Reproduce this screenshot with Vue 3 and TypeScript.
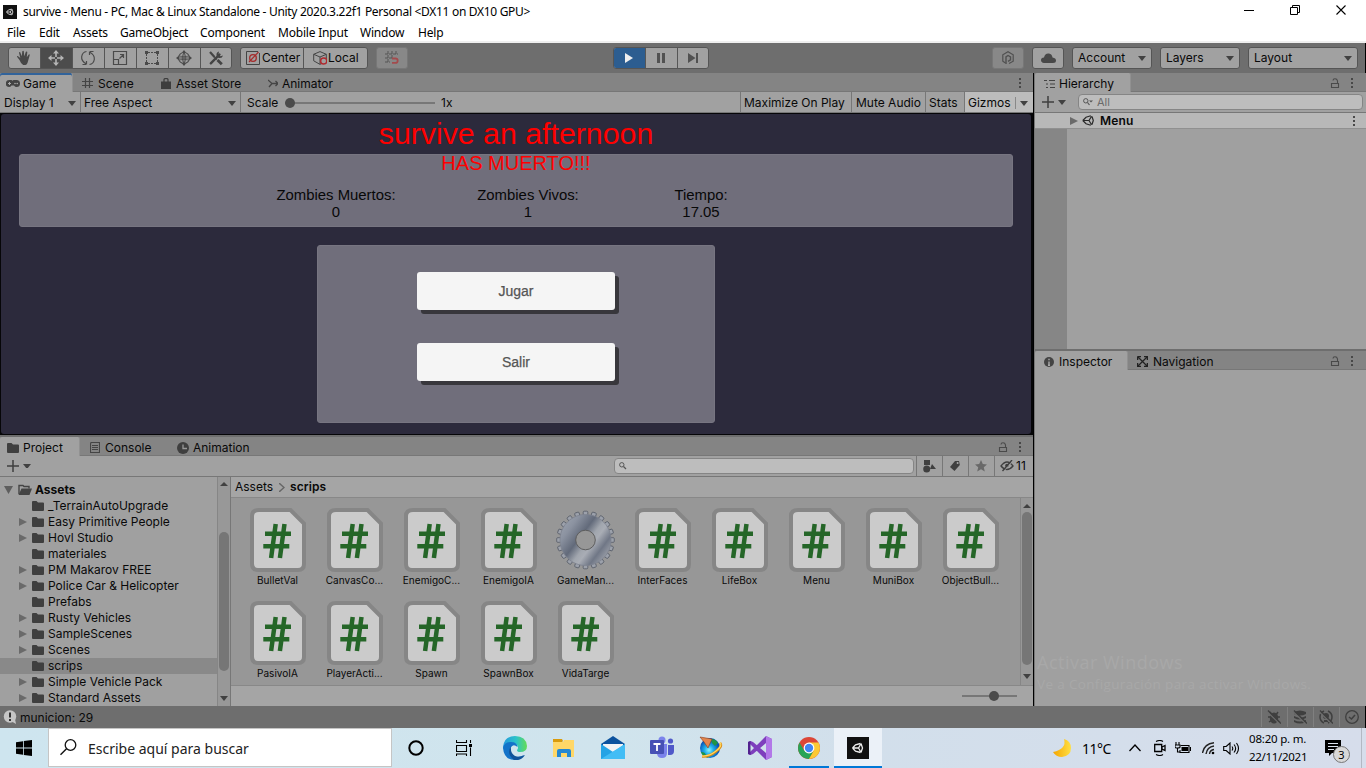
<script setup lang="ts">
import { h } from 'vue'

interface IconProps { name: string; w: number; h: number }
interface Tab { label: string; icon: string; iw: number; ih: number; width: number; pad: number; gap: number; active?: boolean }
interface TreeRow { label: string; arrow: boolean }
interface Asset { label: string; gear?: boolean }

const gearTeeth = Array.from({ length: 20 }, (_, i) =>
  `<rect x="27.2" y="3.2" width="4.600" height="8" rx="1" transform="rotate(${i * 18} 29.5 32)"/>`).join('')

const icons: Record<string, string> = {
  unity: `<rect width="22" height="22" fill="#111"/><path d="M5.500 11l3-3.200 5-1.300M5.500 11l3 3.200 5 1.300M14 6.500l1.500 4.500-1.500 4.500M6 11h5.500l2.300-4M11.500 11l2.300 4" fill="none" stroke="#eee" stroke-width="1.300"/>`,
  min: '<path d="M0 5.500h10" stroke="#000"/>',
  restore: '<path d="M.5 2.500h7v7h-7zM2.500 2.500v-2h7v7h-2" fill="none" stroke="#000"/>',
  close: '<path d="M.5.5l9 9M9.500.5l-9 9" stroke="#000" stroke-width="1.100"/>',
  hand: '<path d="M3.500 10L1 6.800Q.8 5.800 1.800 5.900L4.300 8 3 2.800Q3.300 1.600 4.200 2.300l1.600 4L6.300 1.300q.8-.9 1.500 0l.4 5L9.900 1.800q1-.7 1.400.3L10.800 7.300 12.700 4.400q1.200-.3 1 .8L12.200 10.500q-1 4.500-3 4.500H7.200Q5 14 3.500 10z" fill="#474747"/>',
  move: '<path d="M8 0l3 3.500H5zM8 16l-3-3.500h6zM0 8l3.500-3v6zM16 8l-3.500 3V5z" fill="#b5b5b5"/><path d="M8 3v4M8 9v4M3 8h4M9 8h4" stroke="#b5b5b5" stroke-width="1.600"/>',
  rotate: '<path d="M6.500 14Q1 11 1.700 6.500 2.500 2 6.500 1.500M9.500 2q5.500 3 4.800 7.500-.8 4.500-4.800 5M6 14.500H2.500M6.500 14.500V11M10 1.500h3.500M9.500 1.500V5" fill="none" stroke="#4a4a4a" stroke-width="1.200"/>',
  scale: '<path d="M1.500 1.500h13v13h-13zM1.500 9.500h5v5M7.500 8.500l4-4M8 4.500h3.500V8" fill="none" stroke="#4a4a4a" stroke-width="1.200"/>',
  rect: '<path d="M4 2.500h8M4 13.500h8M2.500 4v8M13.500 4v8" stroke="#4a4a4a" stroke-width="1" stroke-dasharray="2 1"/><path d="M1 1h3v3H1zM12 1h3v3h-3zM1 12h3v3H1zM12 12h3v3h-3z" fill="#4a4a4a"/>',
  transform: '<g fill="none" stroke="#4a4a4a"><circle cx="8" cy="8" r="5.500" stroke-width="1.100"/><path d="M8 2v12M2 8h12M8 2.500Q4.500 8 8 13.500M8 2.500q3.500 5.500 0 11M3 6q5 1.500 10 0M3 10q5-1.500 10 0" stroke-width=".8"/></g><path d="M8 0l2.200 2.800H5.800zM8 16l-2.200-2.800h4.400zM0 8l2.800-2.200v4.400zM16 8l-2.800 2.200V5.800z" fill="#4a4a4a"/>',
  tools: '<path d="M2.800 13.300L11.500 4.500" stroke="#444" stroke-width="2.400" stroke-linecap="round"/><path d="M11 1.500a3.300 3.300 0 1 0 4 4l-2.500.8-2-2z" fill="#444"/><path d="M2 2l4.500 5" stroke="#444" stroke-width="2.200"/><path d="M6 6.500l3 3" stroke="#444" stroke-width="1.200"/><path d="M9.500 10l4.300 4.300" stroke="#444" stroke-width="2.800"/>',
  pivot: '<path d="M12 .5H.5v13h13V2" fill="none" stroke="#444"/><circle cx="7" cy="7" r="3.300" fill="none" stroke="#a52a2a" stroke-width="1.300"/><path d="M3 11L12.500 1" stroke="#a52a2a" stroke-width="1.100"/>',
  local: '<path d="M.7 3.300L7 .6l6.300 2.700v6.500L7 13.400.7 9.800zM.7 3.300L7 6l6.300-2.700M7 6v7" fill="none" stroke="#444"/><circle cx="10.700" cy="10" r="3.100" fill="#a0a0a0" stroke="#b02a2f" stroke-width="1.500"/>',
  snap: '<path d="M3 0v12M7 0v7M11 0v4M0 3h13M0 7h7M0 11h5" stroke="#555" stroke-width="1" stroke-dasharray="3 1"/><path d="M7 7.500h3.500a2.200 2.200 0 0 1 0 4.400H7" fill="none" stroke="#a34b4d" stroke-width="1.800"/>',
  play: '<path d="M1 0l8 5-8 5z" fill="#eee"/>',
  pause: '<path d="M1 0h3v10H1zM6 0h3v10H6z" fill="#515151"/>',
  step: '<path d="M0 0l7.500 5L0 10zM8 0h2v10H8z" fill="#515151"/>',
  package: '<path d="M3.500 12L.8 10.200V3.800L6 .8l5.200 3v6.400L7 12.500" fill="none" stroke="#505050" stroke-width="1.200"/><path d="M4 13V5.800L6 4.500l2.500 1.300v3.100L6 10.300" fill="none" stroke="#505050" stroke-width="1.400"/>',
  cloud: '<path d="M3 10Q0 9.500 0 7t3-2.500Q4 0 8 .5q3 .5 3.500 4Q15 5 15 7.500T12 10z" fill="#484848"/>',
  down: '<path d="M0 0h8L4 5z" fill="#414141"/>',
  up: '<path d="M0 4h8L4 0z" fill="#414141"/>',
  right: '<path d="M0 0v8l8-4z" fill="#6a6a6a"/>',
  open: '<path d="M0 0h9L4.500 8z" fill="#5e5e5e"/>',
  game: '<path d="M3.500 1h2l1 .8 1-.8h3a3.500 3.500 0 0 1 0 7q-1.500 0-2.500-1.500H5.500Q4.500 8 3 8a3.400 3.400 0 0 1 .5-7z" fill="#444"/><path d="M2 4.500h3M3.500 3v3" stroke="#aaa"/><circle cx="9" cy="4.500" r=".8" fill="#aaa"/><circle cx="11.200" cy="4.500" r=".8" fill="#aaa"/>',
  scene: '<path d="M3.500 0v10M7.500 0v10M0 3.500h11M0 7.500h11" stroke="#444" stroke-width="1.200"/>',
  bag: '<path d="M0 3.500h10V11H0z" fill="#3d3d3d"/><path d="M3 4V1.500q0-1 2-1t2 1V4" fill="none" stroke="#3d3d3d" stroke-width="1.200"/>',
  animator: '<path d="M0 1l4 3.500L1 8M4 4.500h5.500M7.500 2L10 4.500 7.500 7" fill="none" stroke="#444" stroke-width="1.300"/>',
  folder: '<path d="M0 2Q0 1 1 1h3.500L6 2.500h5q1 0 1 1V10q0 1-1 1H1q-1 0-1-1z" fill="#3f3f3f"/>',
  folderOpen: '<path d="M1 10V1.500h4l1 1h5v2" fill="none" stroke="#444" stroke-width="1.400"/><path d="M3.500 4.500H14L11.500 11H.5z" fill="#444"/>',
  console: '<path d="M1 .5h8.500v10H.5V2z" fill="none" stroke="#444" stroke-width="1.100"/><path d="M2 3.500h6M2 5.500h6M2 7.500h6" stroke="#444"/>',
  clock: '<circle cx="6" cy="6" r="6" fill="#3f3f3f"/><path d="M6 2.500V6.500h4" fill="none" stroke="#999" stroke-width="1.300"/>',
  list: '<path d="M0 1.500h3M5 1.500h6M2 5h2M6 5h5M2 8.500h2M6 8.500h5" stroke="#444" stroke-width="1.200"/>',
  info: '<circle cx="5" cy="5" r="5" fill="#444"/><path d="M5 1.800v1.500M5 4.500v4M4 8.200h2" stroke="#aaa" stroke-width="1.400"/>',
  nav: '<path d="M1 1l9 9M10 1l-9 9" stroke="#222" stroke-width="1.300"/><path d="M.5.5H4M.5.5V4M7 .5h3.500V4M.5 7v3.500H4M10.500 7v3.500H7" fill="none" stroke="#222" stroke-width="1.600"/>',
  lock: '<path d="M3 2.500Q3 .8 5 .8t2.500 2V5M1.500 5.500h7v4h-7z" fill="none" stroke="#4a4a4a" stroke-width="1.100"/>',
  dots: '<path d="M0 0h2v2H0zM0 4h2v2H0zM0 8h2v2H0z" fill="#484848"/>',
  plus: '<path d="M6 0v12M0 6h12" stroke="#3f3f3f" stroke-width="1.500"/>',
  search: '<circle cx="2.800" cy="2.800" r="2.200" fill="none" stroke="#555" stroke-width="1"/><path d="M4.500 4.500L7 7" stroke="#555" stroke-width="1.200"/>',
  searchMenu: '<circle cx="2.800" cy="2.800" r="2.200" fill="none" stroke="#555" stroke-width="1"/><path d="M4.500 4.500L6.500 7" stroke="#555" stroke-width="1.200"/><path d="M6 2.500h4L8 4.500z" fill="#555"/>',
  unityOutline: '<path d="M.8 5.500L4 2.300 8.800.8M.8 5.500L4 8.700l4.800 1.500M10 1.500l1.300 4-1.300 4M1 5.500h6l2.600-4.300M7 5.500l2.600 4.300" fill="none" stroke="#2a2a2a" stroke-width="1.200"/>',
  crumb: '<path d="M0 0l5 4.500L0 9" fill="none" stroke="#666" stroke-width="1.400"/>',
  types: '<path d="M1 0h6v5H1zM9 4l4 5H7z" fill="#3f3f3f"/><circle cx="3.700" cy="9" r="3.500" fill="#3f3f3f"/>',
  tag: '<path d="M6 1l4 0 .8 4-5.300 6L1 7z" fill="#3f3f3f"/><circle cx="8.600" cy="3" r="1" fill="#aaa"/>',
  star: '<path d="M6 0l1.800 4 4.200.4-3.200 2.800 1 4.300L6 9.200l-3.800 2.300 1-4.300L0 4.400 4.200 4z" fill="#696969"/>',
  eye: '<path d="M1 6q6-8 12 0-6 7-12 0z" fill="none" stroke="#3f3f3f" stroke-width="1.300"/><circle cx="7" cy="5.500" r="1.800" fill="#3f3f3f"/><path d="M3.300 11.500L13 1" stroke="#a1a1a1" stroke-width="1"/><path d="M2.500 11L12 0" stroke="#3f3f3f" stroke-width="1.300"/>',
  script: '<path d="M9 2h31.500L54 15.500V56q0 6-6 6H8q-6 0-6-6V8q0-6 7-6z" fill="#cbcbcb" stroke="#868686" stroke-width="4"/><path d="M25.700 16l-4.600 34M34.500 16l-4.600 34M15 25.800H41M13.300 38.200H39.300" stroke="#256628" stroke-width="4.500" fill="none"/>',
  gear: `<defs><linearGradient id="metal" x1=".1" y1=".2" x2=".9" y2=".8"><stop offset="0" stop-color="#949ba8"/><stop offset=".12" stop-color="#8b92a0"/><stop offset=".38" stop-color="#626a7a"/><stop offset=".56" stop-color="#a1a6ae"/><stop offset=".66" stop-color="#a9adb5"/><stop offset=".85" stop-color="#707786"/><stop offset="1" stop-color="#9398a2"/></linearGradient></defs><g fill="#9ca1ab" stroke="#555b66" stroke-width=".8">${gearTeeth}</g><path d="M29.500 6.500a25.500 25.500 0 1 0 .01 0z" fill="url(#metal)" stroke="#7d838f" stroke-width=".8"/><circle cx="29.500" cy="32" r="9.800" fill="#979797" stroke="#5d5d5d"/>`,
  bubble: '<circle cx="7" cy="6.500" r="6.200" fill="#c6c6c6"/><path d="M8 11l5 3-1-5z" fill="#c6c6c6"/><path d="M7 2.500v5M7 9v2" stroke="#333" stroke-width="2"/>',
  bug: '<path d="M3 2l2 3M11 2L9 5M1 7h12M2 12l3-2M12 12l-3-2" stroke="#3f3f3f" stroke-width="1.500"/><ellipse cx="7" cy="8" rx="4.200" ry="5.500" fill="#3f3f3f"/><path d="M0 1.500l13.500 13" stroke="#6e6e6e" stroke-width="1.300"/><path d="M1 .5l13 13" stroke="#3f3f3f" stroke-width="1.300"/>',
  stack: '<path d="M1 2q6-3 12 0v2Q7 7 1 4zM1 6q6 3 12 0v2Q7 11 1 8zM1 10q6 3 12 0v2q-6 3-12 0z" fill="#3f3f3f"/><path d="M0 1.500l13.500 13" stroke="#6e6e6e" stroke-width="1.300"/><path d="M1 .5l13 13" stroke="#3f3f3f" stroke-width="1.300"/>',
  auto: '<path d="M5 1Q1 3 1 7t4 6M9 1q4 2 4 6t-4 6" fill="none" stroke="#3f3f3f" stroke-width="1.500"/><circle cx="7" cy="6" r="3" fill="#3f3f3f"/><path d="M5 10h4v2H5z" fill="#3f3f3f"/><path d="M0 1.500l13.500 13" stroke="#6e6e6e" stroke-width="1.300"/><path d="M1 .5l13 13" stroke="#3f3f3f" stroke-width="1.300"/>',
  check: '<circle cx="7" cy="7" r="6.300" fill="none" stroke="#3f3f3f" stroke-width="1.300"/><path d="M4 7l2.500 2L10 5" fill="none" stroke="#3f3f3f" stroke-width="1.600"/>',
  win: '<path d="M0 2.200L7 1.200v6.400H0zM7.800 1.100L16 0v7.600H7.800zM0 8.400h7v6.400l-7-1zM7.800 8.400H16V16l-8.200-1.100z" fill="#000"/>',
  winSearch: '<circle cx="10.500" cy="6" r="5.300" fill="none" stroke="#111" stroke-width="1.300"/><path d="M6.500 9.800L.5 15.800" stroke="#111" stroke-width="1.400"/>',
  cortana: '<circle cx="8" cy="8" r="6.700" fill="none" stroke="#000" stroke-width="2"/>',
  taskview: '<path d="M.5 0v2.500h10V0M.5 5.500h10v6H.5zM.5 16v-2h10v2M14.500 0v3M14.500 7.500V16" fill="none" stroke="#000" stroke-width="1.100"/><path d="M13 4h3v3h-3z" fill="#000"/>',
  edge: '<defs><linearGradient id="eg" x1="0" x2="1"><stop stop-color="#2498dc"/><stop offset=".55" stop-color="#2cc3c9"/><stop offset="1" stop-color="#64dc54"/></linearGradient></defs><path d="M0 11Q1 0 12 0t12 10q0 6-7 6-3 0-3-2 2-2 0-5-3-4-9-1Q1 10 0 13z" fill="url(#eg)"/><path d="M0 12Q1 6 8 6q6 0 6.500 5Q10 7 7.500 12 6 20 14 21q4 0 7-2-3 5-9 5Q1 24 0 12z" fill="#1373c9"/><path d="M8 10q-5 8 3 14 7 1 11-5-6 3-10 1-5-3-4-10z" fill="#10539a"/>',
  explorer: '<path d="M0 3h10l1-2h10v17H0z" fill="#ffd767"/><path d="M0 0h9l1 2-1 1H0z" fill="#d99b0c"/><path d="M4 18v-6q0-2 2-2h10q2 0 2 2v6h-4v-4H8v4z" fill="#2588d1"/>',
  mail: '<path d="M0 8L12 0l12 8v14H0z" fill="#0b529e"/><path d="M2 8h20v7l-9 4-11-7z" fill="#f1f3f5"/><path d="M0 8l12 8L24 8v15H0z" fill="#24a3e5"/><path d="M24 8v15H0z" fill="#42bdf5"/>',
  teams: '<circle cx="12" cy="4" r="3.500" fill="#7b83eb"/><circle cx="20.500" cy="5" r="2.600" fill="#5059c9"/><path d="M7 8h10v9q0 5-5 5t-5-5z" fill="#7b83eb"/><path d="M18 9h6v6q0 4-4 4h-2z" fill="#5059c9"/><rect y="4" width="14" height="14" rx="1" fill="#4751b5"/><path d="M3.500 8h7M7 8v7" stroke="#fff" stroke-width="1.800"/>',
  idm: '<defs><radialGradient id="ball" cx=".45" cy=".6"><stop stop-color="#8ff4fa"/><stop offset=".45" stop-color="#20afe8"/><stop offset="1" stop-color="#0753b7"/></radialGradient></defs><circle cx="11" cy="12" r="10" fill="url(#ball)"/><path d="M12 3q5 0 7 4l-3 3-3-3zM2 16q5 0 5 4l3 2q-7-1-8-6z" fill="#1f9445"/><path d="M21 7q3 3-4 8.500T3 20.500" fill="none" stroke="#d98a16" stroke-width="2.600"/><path d="M21 6.500q3 3-4 8.500T3 20" fill="none" stroke="#ffd861" stroke-width="1.200"/><path d="M1 1l12 2-4 9-4-6z" fill="#e2854d" stroke="#8e3a17" stroke-width=".6"/>',
  vs: '<path d="M18 0l6 3v18l-6 3L2 8l-2 1V6l2.500-1L5 6l13 11V7L5 18l-2.500 1L0 18v-3l2 1z" fill="#7e3fbd"/><path d="M0 6l2.500-1v14L0 18z" fill="#52218f"/><path d="M18 0l6 3v18l-6 3z" fill="#b278e8"/>',
  chrome: '<circle cx="11" cy="11" r="11" fill="#dc4637"/><path d="M1.500 5.500A11 11 0 0 0 11 22l4.700-8.300H6.300z" fill="#27a457"/><path d="M11 22a11 11 0 0 0 9.500-16.500H11l4.700 8.200z" fill="#fcc934"/><circle cx="11" cy="11" r="5.400" fill="#fff"/><circle cx="11" cy="11" r="4.200" fill="#4285f4"/>',
  moon: '<defs><linearGradient id="mn" x1="0" x2="1"><stop stop-color="#f5a500"/><stop offset="1" stop-color="#ffe044"/></linearGradient></defs><path d="M11 0q3 10-11 13 3 5 9 5 9-1 9-9 0-7-7-9z" fill="url(#mn)"/>',
  chevron: '<path d="M.5 7L6 1l5.500 6" fill="none" stroke="#000" stroke-width="1.300"/>',
  camera: '<path d="M2 1.500q4-2 7 0M2 14.500q4 2 7 0" fill="none" stroke="#000" stroke-width="1.100"/><path d="M.7 4.500h7v7h-7zM8 7l3-1.500v5L8 9z" fill="none" stroke="#000" stroke-width="1.300"/>',
  battery: '<path d="M1 0v3M4 0v3M0 3h5v2q0 1-2.500 1T0 5zM2.500 6v4H5" fill="none" stroke="#000" stroke-width="1.100"/><path d="M5.500 3.500h8.500v7H5V8" fill="none" stroke="#000" stroke-width="1.100"/><path d="M6.500 5H13v4H6.500zM15 5h1v4h-1z" fill="#000"/>',
  wifi: '<path d="M.5 11Q2 2 12 .8M4 12q1-7 8-8M7.500 12q.5-4 4.500-4.500" fill="none" stroke="#222" stroke-width="1.400"/><circle cx="11" cy="11" r="1.300" fill="#000"/>',
  volume: '<path d="M.7 4.500h2.500L7 1v11L3.200 8.500H.7z" fill="none" stroke="#000" stroke-width="1.100"/><path d="M9 4.500q1.500 2 0 4M11 2.500q3.300 4 0 8M13.500 1q4 5.500 0 11" fill="none" stroke="#000" stroke-width="1.100"/>',
  note: '<path d="M0 0h16v13H7l-3 3v-3H0z" fill="#000"/><path d="M3 3.500h10M3 6.500h10M3 9.500h6" stroke="#dce3ee"/>',
}

const Icon = (p: IconProps) => h('svg', { width: p.w, height: p.h, viewBox: `0 0 ${p.w} ${p.h}`, innerHTML: icons[p.name] })
const UnityLogo = (p: { size: number }) => h('svg', { width: p.size, height: p.size, viewBox: '0 0 22 22', innerHTML: icons.unity })

const menus = [
  { label: 'File', w: 32 }, { label: 'Edit', w: 34 }, { label: 'Assets', w: 47 }, { label: 'GameObject', w: 80 },
  { label: 'Component', w: 78 }, { label: 'Mobile Input', w: 82 }, { label: 'Window', w: 58 }, { label: 'Help', w: 40 },
]
const tools = ['hand', 'move', 'rotate', 'scale', 'rect', 'transform', 'tools']
const dropdowns = [{ label: 'Account', w: 80 }, { label: 'Layers', w: 80 }, { label: 'Layout', w: 110 }]
const gameTabs: Tab[] = [
  { label: 'Game', icon: 'game', iw: 14, ih: 9, width: 73, pad: 6, gap: 3, active: true },
  { label: 'Scene', icon: 'scene', iw: 11, ih: 11, width: 80, pad: 9, gap: 5 },
  { label: 'Asset Store', icon: 'bag', iw: 10, ih: 11, width: 108, pad: 8, gap: 5 },
  { label: 'Animator', icon: 'animator', iw: 10, ih: 9, width: 90, pad: 7, gap: 4 },
]
const projectTabs: Tab[] = [
  { label: 'Project', icon: 'folder', iw: 12, ih: 12, width: 80, pad: 7, gap: 4, active: true },
  { label: 'Console', icon: 'console', iw: 10, ih: 11, width: 88, pad: 10, gap: 5 },
  { label: 'Animation', icon: 'clock', iw: 12, ih: 12, width: 90, pad: 9, gap: 4 },
]
const hierarchyTabs: Tab[] = [{ label: 'Hierarchy', icon: 'list', iw: 11, ih: 10, width: 96, pad: 9, gap: 4, active: true }]
const inspectorTabs: Tab[] = [
  { label: 'Inspector', icon: 'info', iw: 10, ih: 10, width: 93, pad: 9, gap: 5, active: true },
  { label: 'Navigation', icon: 'nav', iw: 11, ih: 11, width: 100, pad: 9, gap: 5 },
]
const stats = [
  { label: 'Zombies Muertos:', value: '0', w: 160 },
  { label: 'Zombies Vivos:', value: '1', w: 224 },
  { label: 'Tiempo:', value: '17.05', w: 122 },
]
const tree: TreeRow[] = [
  ['_TerrainAutoUpgrade', 0], ['Easy Primitive People', 1], ['Hovl Studio', 1], ['materiales', 0], ['PM Makarov FREE', 1],
  ['Police Car & Helicopter', 1], ['Prefabs', 0], ['Rusty Vehicles', 1], ['SampleScenes', 1], ['Scenes', 1], ['scrips', 0],
  ['Simple Vehicle Pack', 1], ['Standard Assets', 1],
].map(([label, arrow]) => ({ label: String(label), arrow: !!arrow }))
const assets: Asset[] = ['BulletVal', 'CanvasCo...', 'EnemigoC...', 'EnemigoIA', 'GameMan...', 'InterFaces', 'LifeBox', 'Menu', 'MuniBox',
  'ObjectBull...', 'PasivoIA', 'PlayerActi...', 'Spawn', 'SpawnBox', 'VidaTarge'].map(label => ({ label, gear: label === 'GameMan...' }))
const apps = [
  { icon: 'edge', w: 24, h: 24 }, { icon: 'explorer', w: 21, h: 18 }, { icon: 'mail', w: 24, h: 23 }, { icon: 'teams', w: 24, h: 23 },
  { icon: 'idm', w: 24, h: 23 }, { icon: 'vs', w: 24, h: 24 }, { icon: 'chrome', w: 22, h: 22, running: true }, { icon: 'unity', w: 22, h: 22, running: true, active: true },
]
const panelTabs = { game: gameTabs, project: projectTabs, hierarchy: hierarchyTabs, inspector: inspectorTabs }
</script>

<template>
  <div class="screen">
    <header class="title">
      <UnityLogo :size="14" />
      <span class="title-text">survive - Menu - PC, Mac &amp; Linux Standalone - Unity 2020.3.22f1 Personal &lt;DX11 on DX10 GPU&gt;</span>
      <div class="win-buttons">
        <Icon name="min" :w="10" :h="10" /><Icon name="restore" :w="10" :h="10" /><Icon name="close" :w="10" :h="10" />
      </div>
    </header>
    <nav class="menu"><span v-for="m in menus" :key="m.label" :style="{ width: m.w + 'px' }">{{ m.label }}</span></nav>

    <div class="toolbar">
      <div class="group tools">
        <button v-for="t in tools" :key="t" :class="{ on: t === 'move' }"><Icon :name="t" :w="16" :h="16" /></button>
      </div>
      <div class="group handles">
        <button class="center"><Icon name="pivot" :w="14" :h="14" />Center</button>
        <button class="local"><Icon name="local" :w="14" :h="14" />Local</button>
      </div>
      <div class="group faded"><button><Icon name="snap" :w="14" :h="14" /></button></div>
      <div class="group playbar">
        <button class="playing"><Icon name="play" :w="10" :h="10" /></button>
        <button><Icon name="pause" :w="10" :h="10" /></button>
        <button><Icon name="step" :w="10" :h="10" /></button>
      </div>
      <div class="right-tools">
        <div class="group faded"><button><Icon name="package" :w="12" :h="14" /></button></div>
        <div class="group"><button><Icon name="cloud" :w="15" :h="11" /></button></div>
        <div v-for="d in dropdowns" :key="d.label" class="group drop" :style="{ width: d.w + 'px' }">{{ d.label }}<Icon name="down" :w="8" :h="5" /></div>
      </div>
    </div>

    <main>
      <section class="left">
        <div class="tabs">
          <div v-for="t in panelTabs.game" :key="t.label" class="tab" :class="{ active: t.active, focus: t.active }" :style="{ width: t.width + 'px', paddingLeft: t.pad + 'px', gap: t.gap + 'px' }">
            <Icon :name="t.icon" :w="t.iw" :h="t.ih" /><span>{{ t.label }}</span>
          </div>
          <div class="tab-tools"><Icon name="dots" :w="2" :h="10" /></div>
        </div>
        <div class="bar game-bar">
          <div class="cell display">Display 1<Icon name="down" :w="8" :h="5" /></div>
          <div class="cell aspect">Free Aspect<Icon name="down" :w="8" :h="5" /></div>
          <div class="cell scale"><span>Scale</span><div class="slider"><i></i></div><span>1x</span></div>
          <div class="cell maxi">Maximize On Play</div>
          <div class="cell mute">Mute Audio</div>
          <div class="cell stat">Stats</div>
          <div class="cell gizmos">Gizmos<i></i><Icon name="down" :w="8" :h="5" /></div>
        </div>
        <div class="game-frame">
          <div class="game">
            <h1>survive an afternoon</h1>
            <div class="results">
              <h2>HAS MUERTO!!!</h2>
              <div class="stats">
                <div v-for="s in stats" :key="s.label" :style="{ width: s.w + 'px' }">{{ s.label }}<br>{{ s.value }}</div>
              </div>
            </div>
            <div class="game-menu"><div class="game-button">Jugar</div><div class="game-button">Salir</div></div>
          </div>
        </div>
        <div class="tabs project-tabs">
          <div v-for="t in panelTabs.project" :key="t.label" class="tab" :class="{ active: t.active }" :style="{ width: t.width + 'px', paddingLeft: t.pad + 'px', gap: t.gap + 'px' }">
            <Icon :name="t.icon" :w="t.iw" :h="t.ih" /><span>{{ t.label }}</span>
          </div>
          <div class="tab-tools"><Icon name="lock" :w="10" :h="10" /><Icon name="dots" :w="2" :h="10" /></div>
        </div>
        <div class="bar project-bar">
          <Icon name="plus" :w="12" :h="12" /><Icon name="down" :w="8" :h="4" />
          <div class="field"><Icon name="search" :w="8" :h="8" /></div>
          <div class="filter"><Icon name="types" :w="13" :h="13" /></div>
          <div class="filter"><Icon name="tag" :w="12" :h="12" /></div>
          <div class="filter"><Icon name="star" :w="12" :h="12" /></div>
          <div class="filter hidden-count"><Icon name="eye" :w="14" :h="12" />11</div>
        </div>
        <div class="project">
          <div class="tree">
            <div class="row root"><Icon name="open" :w="9" :h="8" /><Icon name="folderOpen" :w="14" :h="12" /><b>Assets</b></div>
            <div v-for="r in tree" :key="r.label" class="row" :class="{ selected: r.label === 'scrips' }">
              <span class="arrow"><Icon v-if="r.arrow" name="right" :w="8" :h="8" /></span><Icon name="folder" :w="12" :h="12" /><span>{{ r.label }}</span>
            </div>
          </div>
          <div class="scroll tree-scroll"><Icon name="up" :w="8" :h="5" /><i></i><Icon name="down" :w="8" :h="5" /></div>
          <div class="browser">
            <div class="crumbs"><span>Assets</span><Icon name="crumb" :w="6" :h="9" /><b>scrips</b></div>
            <div class="assets">
              <div class="asset-grid">
                <div v-for="a in assets" :key="a.label" class="asset">
                  <Icon v-if="a.gear" name="gear" :w="59" :h="64" /><Icon v-else name="script" :w="56" :h="64" />
                  <span>{{ a.label }}</span>
                </div>
              </div>
              <div class="scroll asset-scroll"><Icon name="up" :w="8" :h="5" /><i></i><Icon name="down" :w="8" :h="5" /></div>
            </div>
            <div class="zoom-bar"><div class="zoom"><i></i></div></div>
          </div>
        </div>
      </section>

      <aside class="right">
        <div class="tabs">
          <div v-for="t in panelTabs.hierarchy" :key="t.label" class="tab active" :style="{ width: t.width + 'px', paddingLeft: t.pad + 'px', gap: t.gap + 'px' }">
            <Icon :name="t.icon" :w="t.iw" :h="t.ih" /><span>{{ t.label }}</span>
          </div>
          <div class="tab-tools"><Icon name="lock" :w="10" :h="10" /><Icon name="dots" :w="2" :h="10" /></div>
        </div>
        <div class="bar hierarchy-bar">
          <Icon name="plus" :w="12" :h="12" /><Icon name="down" :w="8" :h="5" />
          <div class="field"><Icon name="searchMenu" :w="10" :h="8" /><span>All</span></div>
        </div>
        <div class="scene-row"><Icon name="right" :w="8" :h="8" /><Icon name="unityOutline" :w="13" :h="11" /><b>Menu</b><Icon name="dots" :w="2" :h="10" /></div>
        <div class="hierarchy-body"></div>
        <div class="tabs inspector-tabs">
          <div v-for="t in panelTabs.inspector" :key="t.label" class="tab" :class="{ active: t.active }" :style="{ width: t.width + 'px', paddingLeft: t.pad + 'px', gap: t.gap + 'px' }">
            <Icon :name="t.icon" :w="t.iw" :h="t.ih" /><span>{{ t.label }}</span>
          </div>
          <div class="tab-tools"><Icon name="lock" :w="10" :h="10" /><Icon name="dots" :w="2" :h="10" /></div>
        </div>
        <div class="inspector">
          <div class="activate"><p>Activar Windows</p><small>Ve a Configuración para activar Windows.</small></div>
        </div>
      </aside>
    </main>

    <footer class="status">
      <Icon name="bubble" :w="14" :h="14" /><span>municion: 29</span>
      <div class="status-icons">
        <div v-for="s in ['bug', 'stack', 'auto', 'check']" :key="s"><Icon :name="s" :w="14" :h="14" /></div>
      </div>
    </footer>

    <div class="taskbar">
      <div class="start"><Icon name="win" :w="16" :h="16" /></div>
      <div class="win-search"><Icon name="winSearch" :w="17" :h="17" /><span>Escribe aquí para buscar</span></div>
      <div class="start"><Icon name="cortana" :w="16" :h="16" /></div>
      <div class="start"><Icon name="taskview" :w="16" :h="16" /></div>
      <div class="apps">
        <div v-for="a in apps" :key="a.icon" :class="{ running: a.running, current: a.active }"><Icon v-if="a.icon !== 'explorer'" :name="a.icon" :w="a.w" :h="a.h" /><Icon v-else name="explorer" :w="21" :h="18" /></div>
      </div>
      <div class="tray">
        <Icon name="moon" :w="18" :h="18" /><span class="temp">11°C</span>
        <Icon class="t-chevron" name="chevron" :w="12" :h="8" />
        <Icon class="t-camera" name="camera" :w="12" :h="16" />
        <Icon class="t-battery" name="battery" :w="16" :h="12" />
        <Icon class="t-wifi" name="wifi" :w="13" :h="13" />
        <Icon class="t-volume" name="volume" :w="17" :h="13" />
        <div class="date"><span>08:20 p. m.</span><span>22/11/2021</span></div>
        <div class="note"><Icon name="note" :w="16" :h="16" /><em>3</em></div>
        <div class="peek"></div>
      </div>
    </div>
  </div>
</template>

<style>
body { margin: 0; overflow: hidden; }
</style>
<style scoped>
* { box-sizing: border-box; }
.screen { width: 1366px; height: 768px; overflow: hidden; display: flex; flex-direction: column; background: #6e6e6e; font: 12px/16px Inter, sans-serif; color: #090909; letter-spacing: 0; white-space: nowrap; }
svg { flex: none; display: block; }
.title, .menu, .taskbar { font-family: "Noto Sans", "Open Sans", sans-serif; letter-spacing: 0; }
.title { height: 23px; background: #fff; display: flex; align-items: center; padding: 0 0 0 3px; flex: none; color: #000; }
.title-text { margin-left: 6px; font-size: 12px; letter-spacing: -.305px; }
.win-buttons { margin-left: auto; display: flex; gap: 36px; padding-right: 20px; margin-top: -3px; }
.menu { height: 20px; background: #fff; border-bottom: 2px solid #efefef; padding-left: 7px; display: flex; line-height: 19px; font-size: 12px; letter-spacing: -.2px; flex: none; color: #000; }
.menu span { flex: none; }
.toolbar { height: 30px; flex: none; display: flex; align-items: center; padding-left: 8px; border-right: 1px solid #000; }
.group { height: 22px; display: flex; border: 1px solid #555; border-radius: 3px; background: #a1a1a1; overflow: hidden; flex: none; }
.group button { border: 0; border-right: 1px solid #565656; background: none; padding: 0 1px 0 0; margin: 0; width: 32px; display: flex; align-items: center; justify-content: center; font: inherit; color: inherit; letter-spacing: inherit; flex: none; }
.group button:last-child { border-right: 0; width: 30px; padding-right: 0; }
.group .on { background: #4c4c4c; }
.handles { margin: 0 8px; width: 128px; }
.group .center { width: 63px; gap: 2px; justify-content: flex-start; padding-left: 5px; }
.group .local:last-child { width: 63px; gap: 1px; justify-content: flex-start; padding-left: 9px; }
.faded { background: #888; border-color: #777; }
.playbar { margin-left: 205px; width: 96px; }
.group .playing { background: #2c5d90; }
.right-tools { margin: 0 7px 0 auto; display: flex; gap: 8px; }
.drop { align-items: center; justify-content: space-between; padding: 0 5px; }
main { height: 633px; display: flex; flex: none; }
.left { width: 1034px; border-right: 1px solid #000; display: flex; flex-direction: column; }
.right { width: 332px; border-left: 1px solid #777; display: flex; flex-direction: column; background: #a0a0a0; }
.tabs { height: 19px; flex: none; display: flex; background: #848484; box-shadow: inset 0 -1px #777; }
.tab { display: flex; align-items: center; flex: none; padding-top: 2px; }
.tab.active { background: #a1a1a1; border-radius: 2px 2px 0 0; border-right: 1px solid #919191; }
.tab.focus { box-shadow: inset 0 2px #31639b; }
.tab-tools { margin-left: auto; padding: 0 12px 0 0; display: flex; gap: 11px; align-items: center; }
.right .tab-tools { padding-right: 13px; }
.bar { height: 21px; flex: none; display: flex; align-items: center; background: #a1a1a1; border-bottom: 1px solid #777; }
.cell { height: 20px; border-right: 1px solid #777; display: flex; align-items: center; flex: none; padding: 2px 4px 0; justify-content: space-between; }
.display { width: 81px; } .aspect { width: 160px; padding-left: 3px; } 
.scale { width: 500px; justify-content: flex-start; padding-left: 6px; gap: 6px; }
.scale > span:first-child { width: 32px; }
.slider { width: 150px; height: 2px; background: #777; display: flex; align-items: center; }
.slider i { width: 10px; height: 10px; border-radius: 50%; background: #4b4b4b; }
.maxi { width: 111px; padding-left: 3px; } .mute { width: 74px; } .stat { width: 39px; padding-left: 3px; } .gizmos { width: 68px; background: #bcbcbc; border: 0; padding: 2px 5px 0 3px; }
.gizmos i { width: 1px; height: 12px; background: #888; }
.game-frame { height: 322px; flex: none; background: #060608; padding: 1px 2px 1px 1px; }
.game { height: 320px; background: #2c2a3c; border-radius: 3px; padding: 5px 17px 0; font-family: "Liberation Sans", Arial, sans-serif; letter-spacing: 0; }
.game h1 { margin: 0; text-align: center; color: #ff0000; font: 30.3px/30px "Liberation Sans", sans-serif; }
.results { margin: 5px 0 0 1px; height: 73px; background: #706e7b; border: 1px solid #777581; border-radius: 3px; width: 994px; }
.game h2 { margin: -3px 0 0; text-align: center; color: #ff0000; font: 20px/22px "Liberation Sans", sans-serif; }
.stats { display: flex; padding-left: 236px; margin-top: 13px; text-align: center; font-size: 14.9px; line-height: 17px; color: #080808; }
.stats div { flex: none; }
.game-menu { margin: 18px auto 0; width: 398px; height: 178px; background: #706e7b; border: 1px solid #777581; border-radius: 3px; padding-top: 26px; display: flex; flex-direction: column; align-items: center; gap: 33px; }
.game-button { width: 198px; height: 38px; line-height: 38px; text-align: center; background: #f5f5f5; border-radius: 3px; box-shadow: 4px 4px #38373c; color: #555; font-size: 14px; -webkit-text-stroke: .25px #555; }
.project-tabs { margin-top: 2px; }
.project-bar > svg:first-child { margin-left: 7px; } .project-bar > svg:nth-child(2) { margin-left: 4px; }
.field { height: 16px; border: 1px solid #858585; border-radius: 4px; background: #bdbdbd; display: flex; align-items: center; padding-left: 4px; }
.project-bar .field { margin-left: auto; margin-right: 2px; width: 300px; }
.filter { width: 26px; height: 20px; border-left: 1px solid #777; display: flex; align-items: center; justify-content: center; flex: none; }
.filter svg { margin-right: 1px; }
.hidden-count { width: 39px; gap: 1px; justify-content: flex-start; padding-left: 5px; margin-right: 0; }
.project { height: 229px; flex: none; display: flex; }
.tree { width: 217px; padding-top: 5px; background: #a0a0a0; flex: none; }
.row { height: 16px; display: flex; align-items: center; }
.row.root { padding-left: 4px; gap: 4px; } .row.root svg:first-child { margin-right: 1px; } .row.root b { margin-left: -1px; }
.arrow { width: 32px; padding-left: 19px; flex: none; } .row > span:last-child { margin-left: 4px; }
b { font-weight: 700; }
.selected { background: #898989; }
.scroll { display: flex; flex-direction: column; align-items: center; border-left: 1px solid #868686; background: #989898; flex: none; }
.tree-scroll { width: 14px; border-right: 1px solid #777; padding-top: 5px; }
.scroll i { width: 10px; border-radius: 5px; background: #767676; }
.tree-scroll i { height: 139px; margin: 45px 0 25px; }
.browser { flex: 1; display: flex; flex-direction: column; }
.crumbs { height: 21px; background: #a5a5a5; border-bottom: 1px solid #888; display: flex; align-items: center; padding-left: 4px; gap: 7px; flex: none; } .crumbs b { margin-left: -2px; } .crumbs span { width: 37px; }
.crumbs b, .scene-row b { font-weight: 600; }
.crumbs b { letter-spacing: .1px; }
.assets { height: 187px; background: #979797; display: flex; flex: none; }
.asset-grid { width: 789px; padding: 10px 0 0 8px; display: grid; grid-template-columns: repeat(10, 77px); grid-auto-rows: 93px; }
.asset { display: flex; flex-direction: column; align-items: center; font-size: 10px; line-height: 16px; letter-spacing: .03px; } 
.asset-scroll { width: 13px; padding-top: 6px; } .asset-scroll i { height: 153px; margin: 3px 0 9px; }
.zoom-bar { height: 21px; border-top: 1px solid #888; background: #a5a5a5; display: flex; align-items: center; justify-content: flex-end; padding-right: 16px; }
.zoom { width: 55px; height: 2px; background: #777; display: flex; align-items: center; justify-content: center; } .zoom i { margin-left: 9px; width: 10px; height: 10px; border-radius: 50%; background: #4b4b4b; }
.hierarchy-bar > svg:first-child { margin-left: 7px; } .hierarchy-bar > svg:nth-child(2) { margin-left: 4px; }
.hierarchy-bar .field { margin-left: 12px; width: 285px; color: #6a6a6a; gap: 4px; font-size: 11px; }
.scene-row { height: 16px; background: #b8b8b8; border-bottom: 1px solid #909090; display: flex; align-items: center; padding: 0 11px 0 35px; gap: 4px; flex: none; } .scene-row b { margin-left: 1px; letter-spacing: .15px; } .scene-row svg:last-child { margin-left: auto; }
.hierarchy-body { height: 220px; border-left: 32px solid #868686; flex: none; }
.inspector-tabs { border-top: 2px solid #6e6e6e; height: 21px; }
.inspector { flex: 1; display: flex; align-items: flex-end; color: #a8a8a8; }
.activate { padding: 0 0 12px 2px; font-family: "Open Sans", sans-serif; letter-spacing: 0; } .activate p { margin: 0; font-size: 18px; line-height: 24px; letter-spacing: .5px; } .activate small { display: block; font-size: 13.5px; line-height: 20px; letter-spacing: .35px; }
.status { height: 22px; flex: none; display: flex; align-items: center; gap: 3px; padding-left: 3px; border-right: 1px solid #000; }
.status > span { margin-top: 1px; }
.status-icons { margin-left: auto; display: flex; } .status-icons div { width: 26px; height: 20px; border-left: 1px solid #808080; display: flex; align-items: center; justify-content: center; padding-right: 1px; }
.taskbar { height: 40px; flex: none; display: flex; background: linear-gradient(90deg, #cee5ef 0%, #d0e4ed 45%, #d2dfeb 63%, #d6ddeb 100%); color: #000; }
.start { width: 48px; display: flex; align-items: center; justify-content: center; flex: none; }
.win-search { width: 344px; height: 39px; background: #fff; border: 1px solid #c5c5c5; display: flex; align-items: center; padding-left: 11px; gap: 11px; font-size: 14px; letter-spacing: 0; color: #222; flex: none; }
.win-search span { padding-top: 2px; }
.apps { display: flex; margin-left: 2px; } .apps div { width: 49px; display: flex; align-items: center; justify-content: center; border-bottom: 2px solid transparent; padding-top: 1px; }
.apps .running { background: linear-gradient(#0078d7, #0078d7) center bottom / 40px 2px no-repeat border-box; } .apps .current { width: 48px; margin-left: 1px; background: #ebf1f8; border-color: #0078d7; }
.tray { margin-left: auto; display: flex; align-items: center; }
.temp { margin-left: 11px; width: 47px; font-size: 14px; letter-spacing: -.5px; padding-top: 1px; }
.t-camera { margin-left: 13px; } .t-battery { margin-left: 9px; } .t-wifi { margin-left: 11px; } .t-volume { margin-left: 8px; }
.date { width: 76px; margin-left: 9px; display: flex; flex-direction: column; align-items: flex-start; font-size: 11.5px; line-height: 18px; letter-spacing: -.3px; }
.date span:first-child { letter-spacing: -.2px; }
.note { position: relative; width: 36px; } .note em { position: absolute; left: 8px; top: 6px; width: 17px; height: 17px; border: 1px solid #777; border-radius: 50%; background: #d8d8d8; font: 11px/15px "Noto Sans", sans-serif; text-align: center; }
.peek { width: 5px; height: 40px; border-left: 1px solid #b2b8c3; }
</style>
